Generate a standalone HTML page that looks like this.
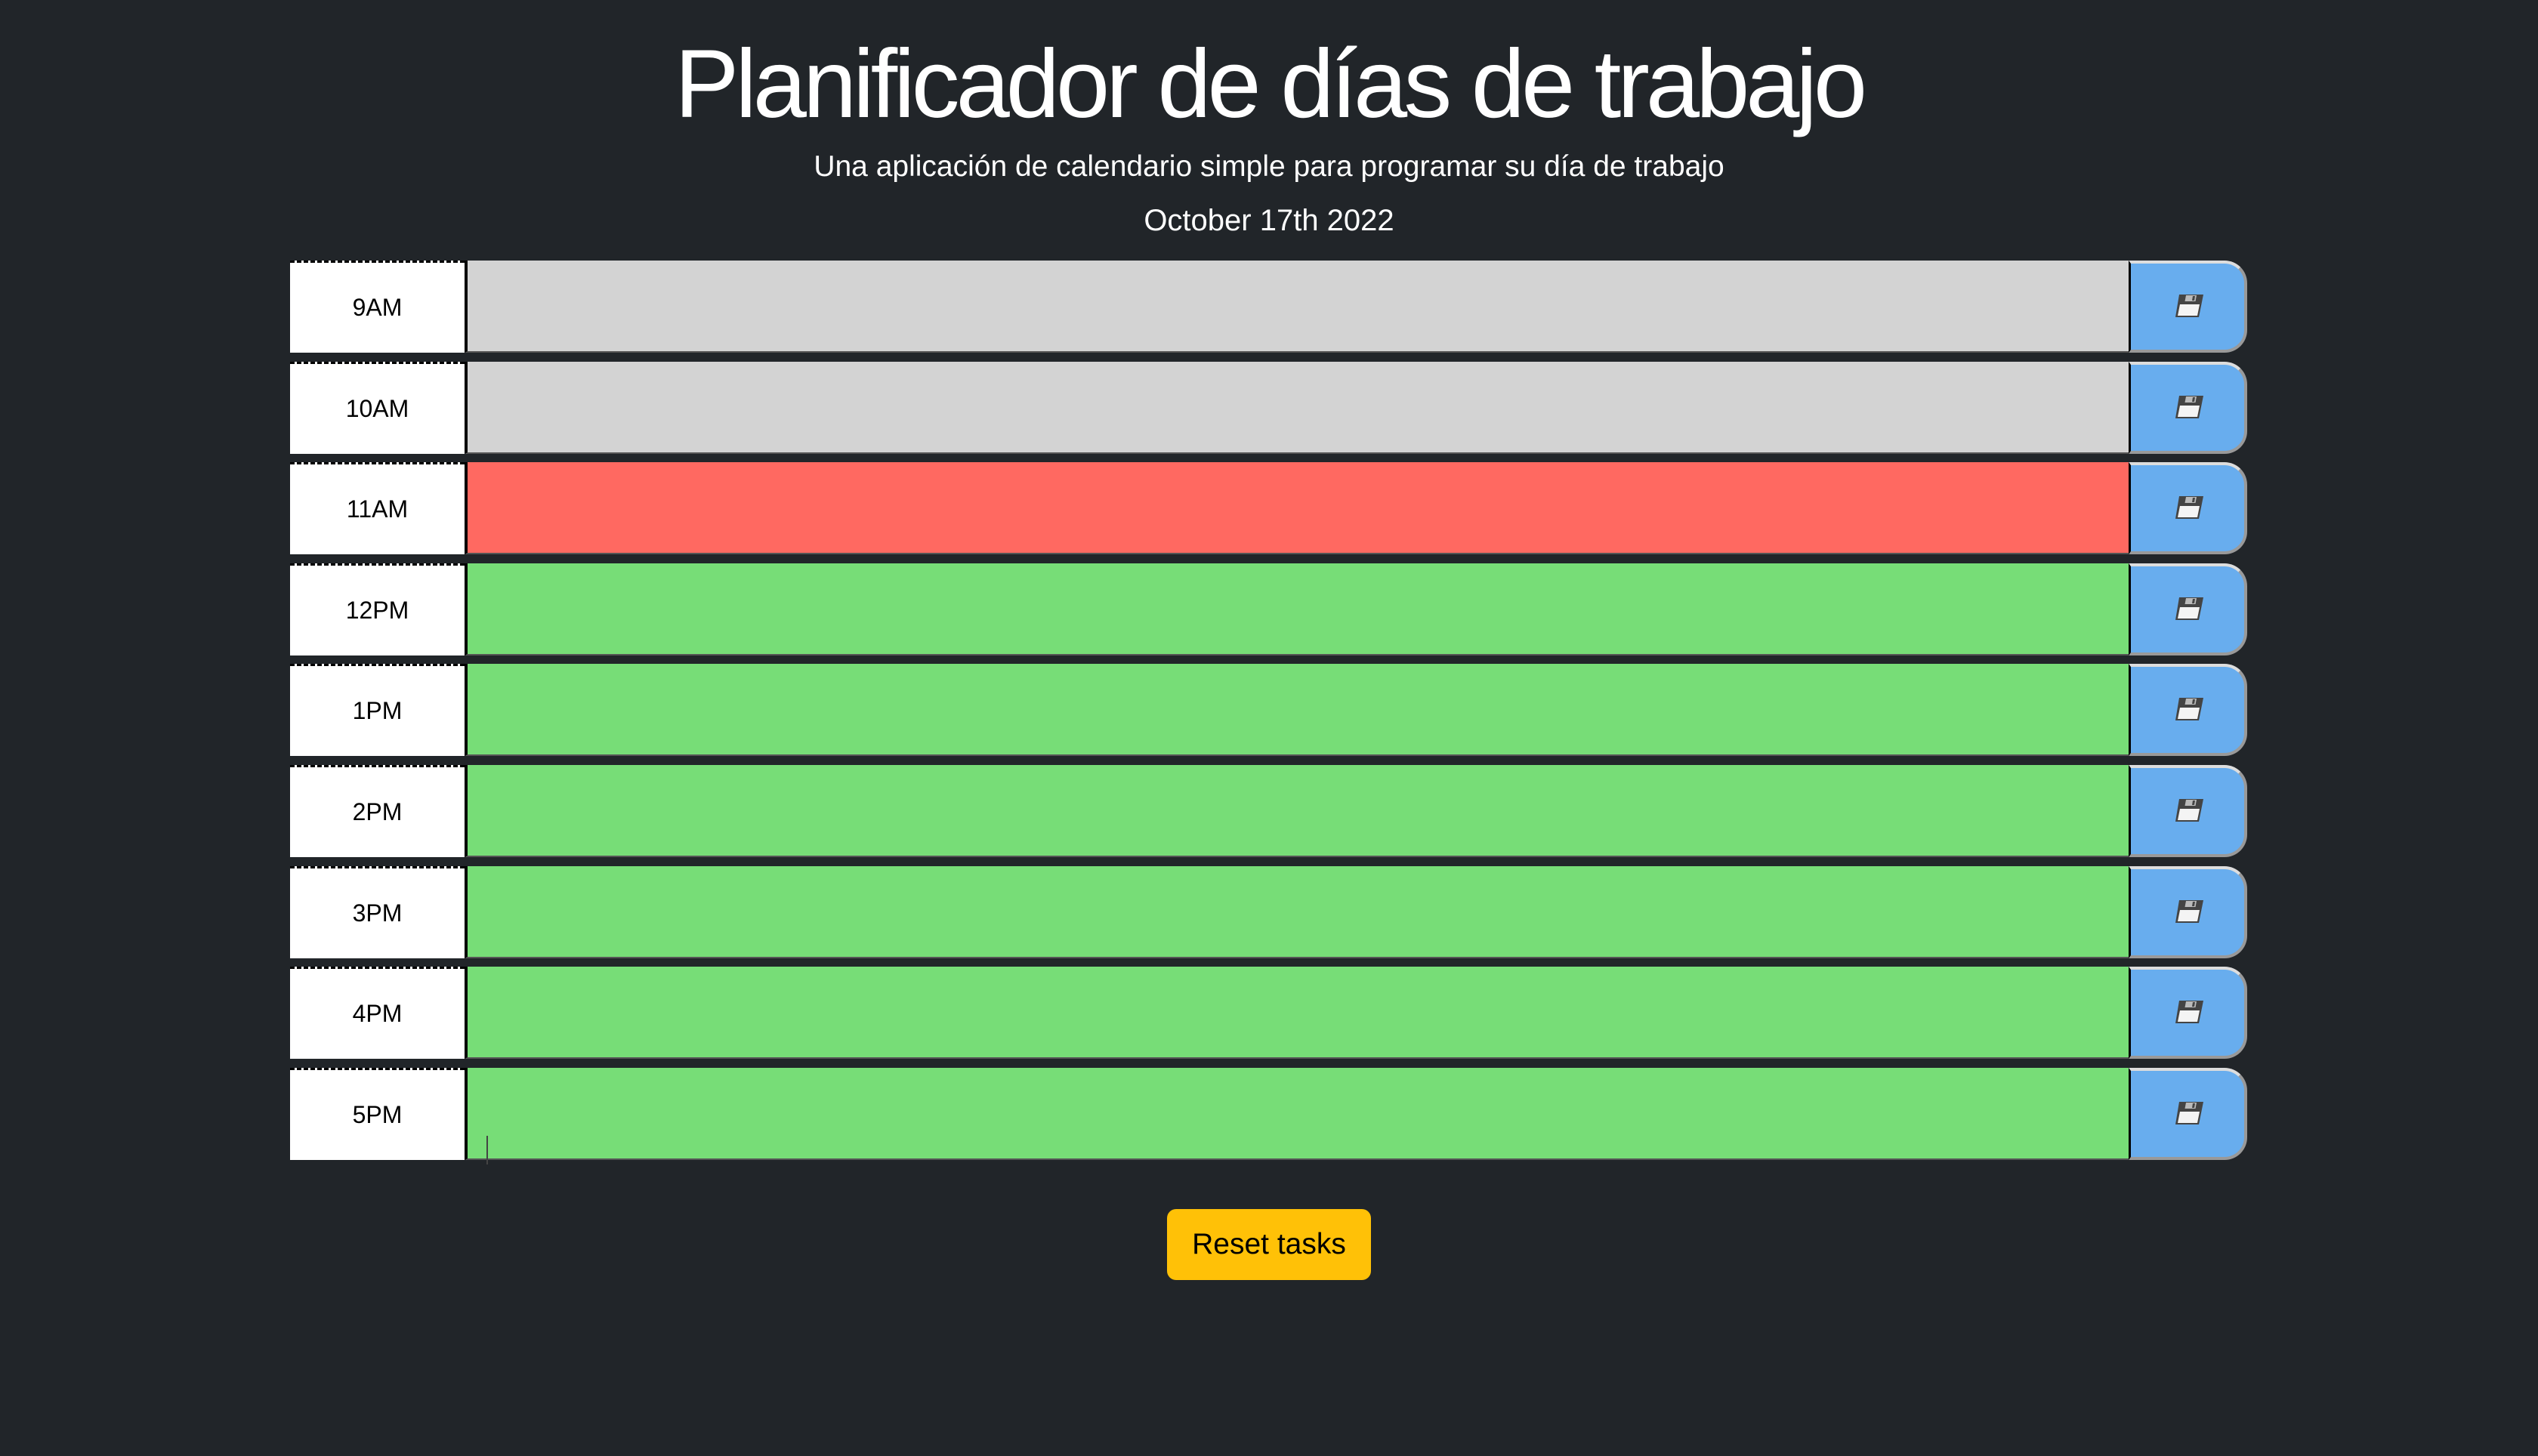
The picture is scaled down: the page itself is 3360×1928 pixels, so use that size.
<!DOCTYPE html>
<html><head><meta charset="utf-8"><style>
*{margin:0;padding:0;box-sizing:border-box}
body{width:3360px;height:1928px;background:#212529;font-family:"Liberation Sans",sans-serif;color:#fff;position:relative;overflow:hidden}
.t{position:absolute;left:0;width:3360px;text-align:center;white-space:nowrap}
.sub{top:199px;font-size:39px}
.date{top:270px;font-size:40px}
.row{position:absolute;left:384px;height:122px;width:2591px}
.time{position:absolute;left:0;top:0;width:231px;height:122px;background:#fff;border-top:3px dashed #000;color:#000;font-size:32px;display:flex;align-items:center;justify-content:center}
.ta{position:absolute;left:231px;top:0;width:2203px;height:122px;border-left:4px solid #000;border-bottom:2px solid #555}
.btn{position:absolute;left:2434px;top:0;width:157px;height:122px;background:#68adee;border-radius:0 30px 30px 0;border-top:4px solid #ddd;border-right:4px solid #999;border-bottom:4px solid #999;border-left:3px solid #000;display:flex;align-items:center;justify-content:center;padding-left:6px}
.reset{position:absolute;left:1545px;top:1601px;width:270px;height:94px;background:#ffc107;border-radius:12px;color:#000;font-size:39px;display:flex;align-items:center;justify-content:center}
</style></head><body>
<div class="t" style="top:38px;font-size:128px;letter-spacing:-5px">Planificador de días de trabajo</div>
<div class="t sub">Una aplicación de calendario simple para programar su día de trabajo</div>
<div class="t date">October 17th 2022</div>

<div class="row" style="top:345px"><div class="time">9AM</div><div class="ta" style="background:#d3d3d3"></div><div class="btn"><svg width="38" height="32" viewBox="0 0 38 32"><path d="M5 0h32l-6 30H0z" fill="#444"/><path d="M14 1h14l-1.5 8H12.5z" fill="#bbb"/><path d="M23 2h3l-1 6h-3z" fill="#444"/><path d="M6 13h26l-3 15H3z" fill="#f4f4f4"/></svg></div></div>
<div class="row" style="top:479px"><div class="time">10AM</div><div class="ta" style="background:#d3d3d3"></div><div class="btn"><svg width="38" height="32" viewBox="0 0 38 32"><path d="M5 0h32l-6 30H0z" fill="#444"/><path d="M14 1h14l-1.5 8H12.5z" fill="#bbb"/><path d="M23 2h3l-1 6h-3z" fill="#444"/><path d="M6 13h26l-3 15H3z" fill="#f4f4f4"/></svg></div></div>
<div class="row" style="top:612px"><div class="time">11AM</div><div class="ta" style="background:#ff6961"></div><div class="btn"><svg width="38" height="32" viewBox="0 0 38 32"><path d="M5 0h32l-6 30H0z" fill="#444"/><path d="M14 1h14l-1.5 8H12.5z" fill="#bbb"/><path d="M23 2h3l-1 6h-3z" fill="#444"/><path d="M6 13h26l-3 15H3z" fill="#f4f4f4"/></svg></div></div>
<div class="row" style="top:746px"><div class="time">12PM</div><div class="ta" style="background:#77dd77"></div><div class="btn"><svg width="38" height="32" viewBox="0 0 38 32"><path d="M5 0h32l-6 30H0z" fill="#444"/><path d="M14 1h14l-1.5 8H12.5z" fill="#bbb"/><path d="M23 2h3l-1 6h-3z" fill="#444"/><path d="M6 13h26l-3 15H3z" fill="#f4f4f4"/></svg></div></div>
<div class="row" style="top:879px"><div class="time">1PM</div><div class="ta" style="background:#77dd77"></div><div class="btn"><svg width="38" height="32" viewBox="0 0 38 32"><path d="M5 0h32l-6 30H0z" fill="#444"/><path d="M14 1h14l-1.5 8H12.5z" fill="#bbb"/><path d="M23 2h3l-1 6h-3z" fill="#444"/><path d="M6 13h26l-3 15H3z" fill="#f4f4f4"/></svg></div></div>
<div class="row" style="top:1013px"><div class="time">2PM</div><div class="ta" style="background:#77dd77"></div><div class="btn"><svg width="38" height="32" viewBox="0 0 38 32"><path d="M5 0h32l-6 30H0z" fill="#444"/><path d="M14 1h14l-1.5 8H12.5z" fill="#bbb"/><path d="M23 2h3l-1 6h-3z" fill="#444"/><path d="M6 13h26l-3 15H3z" fill="#f4f4f4"/></svg></div></div>
<div class="row" style="top:1147px"><div class="time">3PM</div><div class="ta" style="background:#77dd77"></div><div class="btn"><svg width="38" height="32" viewBox="0 0 38 32"><path d="M5 0h32l-6 30H0z" fill="#444"/><path d="M14 1h14l-1.5 8H12.5z" fill="#bbb"/><path d="M23 2h3l-1 6h-3z" fill="#444"/><path d="M6 13h26l-3 15H3z" fill="#f4f4f4"/></svg></div></div>
<div class="row" style="top:1280px"><div class="time">4PM</div><div class="ta" style="background:#77dd77"></div><div class="btn"><svg width="38" height="32" viewBox="0 0 38 32"><path d="M5 0h32l-6 30H0z" fill="#444"/><path d="M14 1h14l-1.5 8H12.5z" fill="#bbb"/><path d="M23 2h3l-1 6h-3z" fill="#444"/><path d="M6 13h26l-3 15H3z" fill="#f4f4f4"/></svg></div></div>
<div class="row" style="top:1414px"><div class="time">5PM</div><div class="ta" style="background:#77dd77"></div><div class="btn"><svg width="38" height="32" viewBox="0 0 38 32"><path d="M5 0h32l-6 30H0z" fill="#444"/><path d="M14 1h14l-1.5 8H12.5z" fill="#bbb"/><path d="M23 2h3l-1 6h-3z" fill="#444"/><path d="M6 13h26l-3 15H3z" fill="#f4f4f4"/></svg></div></div>
<div style="position:absolute;left:644px;top:1504px;width:2px;height:38px;background:#444"></div>

<div class="reset">Reset tasks</div>
</body></html>
